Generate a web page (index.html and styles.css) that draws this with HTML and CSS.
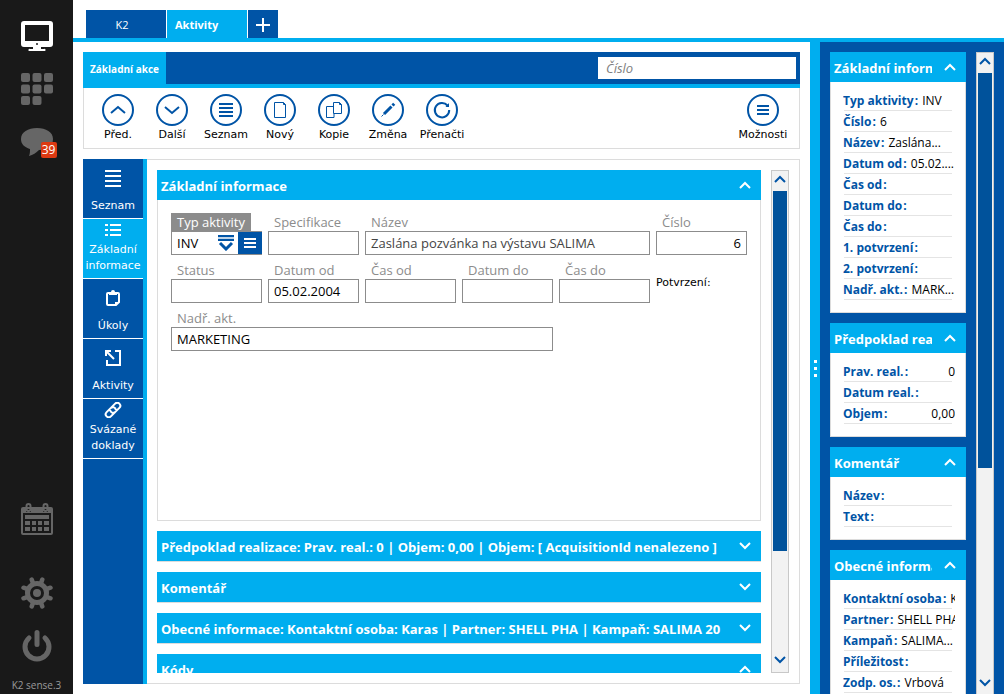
FILE: index.html
```html
<!DOCTYPE html>
<html lang="cs">
<head>
<meta charset="utf-8">
<meta name="viewport" content="width=device-width, initial-scale=1">
<title>K2 – Aktivity</title>
<link rel="stylesheet" href="styles.css">
</head>
<body>
<svg class="defs" aria-hidden="true">
  <symbol id="up" viewBox="0 0 12 8"><path d="M1 7l5-5 5 5" fill="none" stroke="currentColor" stroke-width="2"/></symbol>
  <symbol id="down" viewBox="0 0 12 8"><path d="M1 1l5 5 5-5" fill="none" stroke="currentColor" stroke-width="2"/></symbol>
</svg>
<div class="app">
  <nav class="rail" aria-label="Hlavní">
    <button class="rail-btn active" aria-label="Plocha"><svg viewBox="0 0 32 32"><path fill="currentColor" fill-rule="evenodd" d="M3 1h26a3 3 0 0 1 3 3v20a3 3 0 0 1-3 3h-9v2h3a1 1 0 0 1 1 2H8a1 1 0 0 1 1-2h3v-2H3a3 3 0 0 1-3-3V4a3 3 0 0 1 3-3zM4 5v16h24V5z"/><circle cx="16" cy="24" r="1" fill="#191919"/></svg></button>
    <button class="rail-btn" aria-label="Moduly"><svg viewBox="0 0 32 32" fill="currentColor"><rect width="9" height="9" rx="2"/><rect x="11.5" width="9" height="9" rx="2"/><rect x="23" width="9" height="9" rx="2"/><rect y="11.5" width="9" height="9" rx="2"/><rect x="11.5" y="11.5" width="9" height="9" rx="2"/><rect x="23" y="11.5" width="9" height="9" rx="2"/><rect y="23" width="9" height="9" rx="2"/><rect x="11.5" y="23" width="9" height="9" rx="2"/></svg></button>
    <button class="rail-btn" aria-label="Zprávy"><svg viewBox="0 0 32 32"><path fill="currentColor" d="M16 2c9 0 16 4 16 11s-6 11-14 11c-3 3-6 5-10 6 1-2 1-5 1-7-6-2-9-5-9-10C0 6 7 2 16 2z"/></svg><span class="badge">39</span></button>
    <div class="spacer"></div>
    <button class="rail-btn calendar" aria-label="Kalendář"><svg viewBox="0 0 32 32"><g fill="none" stroke="currentColor" stroke-width="2"><rect x="1" y="5" width="30" height="26" rx="1"/><rect x="5.500" y="1" width="4" height="7" rx="2"/><rect x="22.500" y="1" width="4" height="7" rx="2"/></g><path fill="currentColor" d="M1 5h4v4h5V5h12v4h5V5h4v5H1zM4 12h24v4H4zM4 18h5v4H4zM11 18h4v4h-4zM17 18h4v4h-4zM23 18h5v4h-5zM4 24h5v4H4zM11 24h4v4h-4zM17 24h4v4h-4zM23 24h5v4h-5z"/></svg></button>
    <button class="rail-btn" aria-label="Nastavení"><svg viewBox="0 0 32 32"><circle cx="16" cy="16" r="9.500" fill="none" stroke="currentColor" stroke-width="5"/><circle cx="16" cy="16" r="4" fill="currentColor"/><g stroke="currentColor" stroke-width="4.500" stroke-linecap="round"><path d="M12.200 6.800l-1.500-4.300M19.800 6.800l1.500-4.300M12.200 25.200l-1.500 4.300M19.800 25.200l1.500 4.300M6.800 12.200l-4.300-1.500M6.800 19.800l-4.300 1.500M25.200 12.200l4.300-1.500M25.200 19.800l4.300 1.500"/></g></svg></button>
    <button class="rail-btn" aria-label="Odhlásit"><svg viewBox="0 0 32 32" fill="none" stroke="currentColor" stroke-width="5" stroke-linecap="round"><path d="M16 2.500v12M8 8a12 12 0 1 0 16 0"/></svg></button>
    <div class="version">K2 sense.3</div>
  </nav>

  <div class="workspace">
    <div class="tabs">
      <button class="tab">K2</button>
      <button class="tab current">Aktivity</button>
      <button class="tab add" aria-label="Nová záložka"><svg width="14" height="14" viewBox="0 0 14 14"><path d="M7 0v14M0 7h14" stroke="#fff" stroke-width="2"/></svg></button>
    </div>

    <div class="desk">
      <main class="main">
        <header class="ribbon">
          <button class="ribbon-tab">Základní akce</button>
          <input class="search" type="text" placeholder="Číslo" aria-label="Číslo">
        </header>
        <div class="toolbar">
          <button class="tool"><svg viewBox="0 0 32 32"><circle cx="16" cy="16" r="15"/><path d="M9 19l7-6 7 6"/></svg>Před.</button>
          <button class="tool"><svg viewBox="0 0 32 32"><circle cx="16" cy="16" r="15"/><path d="M9 13l7 6 7-6"/></svg>Další</button>
          <button class="tool"><svg viewBox="0 0 32 32"><circle cx="16" cy="16" r="15"/><path d="M9 10h14M9 14h14M9 18h14M9 22h14"/></svg>Seznam</button>
          <button class="tool"><svg viewBox="0 0 32 32"><circle cx="16" cy="16" r="15"/><path class="thin" d="M10.500 8.500h9l2 2v13h-11zM19.500 8.500v2h2"/></svg>Nový</button>
          <button class="tool"><svg viewBox="0 0 32 32"><circle cx="16" cy="16" r="15"/><path class="thin" d="M15.500 19.500v-11h6l2 2v9zM21.500 8.500v2h2M15.500 12.500h-7v11h7.500v-4"/></svg>Kopie</button>
          <button class="tool"><svg viewBox="0 0 32 32"><circle cx="16" cy="16" r="15"/><path class="pencil" d="M12 20l7.500-7.500M20.500 11.500l1.700-1.700"/><path class="thin" d="M9.500 22.500l2-2"/></svg>Změna</button>
          <button class="tool"><svg viewBox="0 0 32 32"><circle cx="16" cy="16" r="15"/><path d="M21.500 11.500a7.200 7.200 0 1 0 1.700 4.500"/><path class="solid" d="M19.500 13H23V9z"/></svg>Přenačti</button>
          <button class="tool options"><svg viewBox="0 0 32 32"><circle cx="16" cy="16" r="15"/><path d="M10 12h12M10 16h12M10 20h12"/></svg>Možnosti</button>
        </div>

        <div class="detail">
          <nav class="side" aria-label="Části záznamu">
            <button class="side-item"><svg width="16" height="18" viewBox="0 0 16 18" stroke="#fff" stroke-width="2"><path d="M0 2h16M0 7h16M0 12h16M0 17h16"/></svg>Seznam</button>
            <button class="side-item current"><svg class="short" width="16" height="16" viewBox="0 0 16 16" stroke="#fff" stroke-width="2"><path d="M0 3h3M5 3h11M0 8h3M5 8h11M0 13h3M5 13h11"/></svg>Základní informace</button>
            <button class="side-item"><svg width="16" height="18" viewBox="0 0 16 18"><path d="M3 4h10a1 1 0 0 1 1 1v8l-3 3H3a1 1 0 0 1-1-1V5a1 1 0 0 1 1-1z" fill="none" stroke="#fff" stroke-width="2"/><path d="M4 6V3h2a2 2 0 0 1 4 0h2v3zM10 17v-4h4z" fill="#fff"/></svg>Úkoly</button>
            <button class="side-item"><svg width="16" height="18" viewBox="0 0 16 18" fill="none" stroke="#fff" stroke-width="2"><path d="M10 2h5v14H2v-5M1 7V2h5M1 2l8 8"/></svg>Aktivity</button>
            <button class="side-item"><svg class="short" width="18" height="16" viewBox="0 0 18 16" fill="none" stroke="#fff" stroke-width="2"><g transform="rotate(-45 9 8)"><path d="M9 11H3a3 3 0 0 1 0-6h6a3 3 0 0 1 2 5M9 5h6a3 3 0 0 1 0 6H9a3 3 0 0 1-2-5"/></g></svg>Svázané doklady</button>
          </nav>

          <div class="panel">
            <div class="sections">
              <section class="section">
                <button class="head" aria-expanded="true"><span>Základní informace</span><svg><use href="#up"/></svg></button>
                <form class="form">
                  <div class="field"><label class="focus" for="typ">Typ aktivity</label><div class="combo"><input id="typ" value="INV"><button type="button" aria-label="Rozbalit"><svg width="16" height="16" viewBox="0 0 16 16"><path d="M0 1h16M0 5h16" stroke="#0054a6" stroke-width="2"/><path d="M0 3h16" stroke="#7fa9d2"/><path d="M2 8l6 6 6-6" fill="none" stroke="#0054a6" stroke-width="3"/></svg></button><button type="button" class="menu" aria-label="Nabídka"><svg width="12" height="12" viewBox="0 0 12 12"><path d="M0 2h12M0 6h12M0 10h12" stroke="#fff" stroke-width="2"/></svg></button></div></div>
                  <div class="field"><label for="spec">Specifikace</label><input id="spec"></div>
                  <div class="field w3"><label for="nazev">Název</label><input class="muted" id="nazev" value="Zaslána pozvánka na výstavu SALIMA"></div>
                  <div class="field"><label for="cislo">Číslo</label><input class="number" id="cislo" value="6"></div>
                  <div class="field"><label for="status">Status</label><input id="status"></div>
                  <div class="field"><label for="dod">Datum od</label><input id="dod" value="05.02.2004"></div>
                  <div class="field"><label for="cod">Čas od</label><input id="cod"></div>
                  <div class="field"><label for="ddo">Datum do</label><input id="ddo"></div>
                  <div class="field"><label for="cdo">Čas do</label><input id="cdo"></div>
                  <div class="confirm">Potvrzení:</div>
                  <div class="field w4"><label for="nadr">Nadř. akt.</label><input id="nadr" value="MARKETING"></div>
                </form>
              </section>
              <section class="section closed"><button class="head" aria-expanded="false"><span>Předpoklad realizace: Prav. real.: 0 | Objem: 0,00 | Objem: [ AcquisitionId nenalezeno ]</span><svg><use href="#down"/></svg></button></section>
              <section class="section closed"><button class="head" aria-expanded="false"><span>Komentář</span><svg><use href="#down"/></svg></button></section>
              <section class="section closed"><button class="head" aria-expanded="false"><span>Obecné informace: Kontaktní osoba: Karas | Partner: SHELL PHA | Kampaň: SALIMA 20</span><svg><use href="#down"/></svg></button></section>
              <section class="section closed"><button class="head" aria-expanded="true"><span>Kódy</span><svg><use href="#up"/></svg></button></section>
            </div>
            <div class="scroll">
              <button aria-label="Nahoru"><svg><use href="#up"/></svg></button>
              <div class="track"><div class="thumb"></div></div>
              <button aria-label="Dolů"><svg><use href="#down"/></svg></button>
            </div>
          </div>
        </div>
      </main>

      <div class="splitter"><i></i><i></i><i></i></div>

      <aside class="preview">
        <div class="cards">
          <section class="card">
            <button class="head" aria-expanded="true"><span>Základní informace</span><svg><use href="#up"/></svg></button>
            <dl>
              <div><dt>Typ aktivity&#8202;:</dt><dd>INV</dd></div>
              <div><dt>Číslo&#8202;:</dt><dd>6</dd></div>
              <div><dt>Název&#8202;:</dt><dd>Zaslána...</dd></div>
              <div><dt>Datum od&#8202;:</dt><dd>05.02....</dd></div>
              <div><dt>Čas od&#8202;:</dt><dd></dd></div>
              <div><dt>Datum do&#8202;:</dt><dd></dd></div>
              <div><dt>Čas do&#8202;:</dt><dd></dd></div>
              <div><dt>1. potvrzení&#8202;:</dt><dd></dd></div>
              <div><dt>2. potvrzení&#8202;:</dt><dd></dd></div>
              <div><dt>Nadř. akt.&#8202;:</dt><dd>MARK...</dd></div>
            </dl>
          </section>
          <section class="card">
            <button class="head" aria-expanded="true"><span>Předpoklad realizace</span><svg><use href="#up"/></svg></button>
            <dl>
              <div><dt>Prav. real.&#8202;:</dt><dd class="number">0</dd></div>
              <div><dt>Datum real.&#8202;:</dt><dd></dd></div>
              <div><dt>Objem&#8202;:</dt><dd class="number">0,00</dd></div>
            </dl>
          </section>
          <section class="card">
            <button class="head" aria-expanded="true"><span>Komentář</span><svg><use href="#up"/></svg></button>
            <dl>
              <div><dt>Název&#8202;:</dt><dd></dd></div>
              <div><dt>Text&#8202;:</dt><dd></dd></div>
            </dl>
          </section>
          <section class="card">
            <button class="head" aria-expanded="true"><span>Obecné informace</span><svg><use href="#up"/></svg></button>
            <dl>
              <div><dt>Kontaktní osoba&#8202;:</dt><dd>K</dd></div>
              <div><dt>Partner&#8202;:</dt><dd>SHELL PHA</dd></div>
              <div><dt>Kampaň&#8202;:</dt><dd>SALIMA...</dd></div>
              <div><dt>Příležitost&#8202;:</dt><dd></dd></div>
              <div><dt>Zodp. os.&#8202;:</dt><dd>Vrbová</dd></div>
            </dl>
          </section>
        </div>
        <div class="scroll long">
          <button aria-label="Nahoru"><svg><use href="#up"/></svg></button>
          <div class="track"><div class="thumb"></div></div>
          <button aria-label="Dolů"><svg><use href="#down"/></svg></button>
        </div>
      </aside>
    </div>
  </div>
</div>
</body>
</html>
```
FILE: styles.css
```css
:root {
  --blue: #0054a6;
  --cyan: #00aeef;
  --line: #dcdcdc;
  --ui: "Open Sans", "Noto Sans", sans-serif;
  --wide: "DejaVu Sans", sans-serif;
}

* { box-sizing: border-box; }

body {
  margin: 0;
  background: #fff;
  color: #000;
  font: 13px/18px var(--ui);
}

button {
  margin: 0;
  padding: 0;
  border: 0;
  background: none;
  color: inherit;
  font: inherit;
  cursor: pointer;
}

input {
  width: 100%;
  min-width: 0;
  height: 24px;
  margin: 0;
  padding: 0 5px;
  border: 1px solid #8c8c8c;
  border-radius: 0;
  background: #fff;
  color: #000;
  font: 13px/18px var(--ui);
  outline: 0;
}

svg { display: block; flex: none; }
.defs { display: none; }

.app {
  display: flex;
  height: 100vh;
  overflow: hidden;
}

/* Dark rail */
.rail {
  display: flex;
  flex-direction: column;
  align-items: center;
  gap: 21px;
  flex: none;
  width: 73px;
  padding: 20px 0 1px;
  background: #191919;
  color: #666;
}
.rail-btn { position: relative; width: 32px; height: 32px; }
.rail-btn svg { width: 32px; height: 32px; }
.rail-btn.active { color: #fff; }
.rail .spacer { flex: 1; }
.calendar { margin-bottom: 21px; }
.badge {
  position: absolute;
  right: -4px;
  bottom: 0;
  width: 16px;
  border-radius: 2px;
  background: #dc3912;
  color: #fff;
  font-size: 12px;
  line-height: 16px;
  text-align: center;
}
.version {
  margin-top: -6px;
  color: #999;
  font-size: 10px;
  line-height: 16px;
}

/* Tabs */
.workspace {
  display: flex;
  flex-direction: column;
  flex: 1;
  min-width: 0;
}
.tabs {
  display: flex;
  gap: 1px;
  padding: 10px 13px 0;
  border-bottom: 4px solid var(--cyan);
}
.tab {
  width: 80px;
  height: 28px;
  padding: 2px 8px 0 0;
  background: var(--blue);
  color: #fff;
  font-size: 11px;
}
.tab.current {
  padding: 2px 0 0 8px;
  background: var(--cyan);
  font-weight: 700;
  text-align: left;
}
.tab.add {
  display: grid;
  place-items: center;
  width: 30px;
  padding: 2px 0 0;
}

.desk { display: flex; flex: 1; min-height: 0; }

.main {
  display: flex;
  flex-direction: column;
  flex: 1;
  min-width: 0;
  padding: 10px;
}

.ribbon {
  display: flex;
  justify-content: space-between;
  flex: none;
  height: 36px;
  border-bottom: 4px solid var(--cyan);
  background: var(--blue);
}
.ribbon-tab {
  width: 83px;
  padding-top: 2px;
  background: var(--cyan);
  color: #fff;
  font-size: 10px;
  font-weight: 700;
}
.search {
  width: 198px;
  height: 22px;
  margin: 5px 4px 0 0;
  padding: 0 8px;
  border: 0;
}
.search::placeholder { color: #808080; font-style: italic; opacity: 1; }

.toolbar {
  display: flex;
  flex: none;
  height: 61px;
  margin-bottom: 10px;
  padding: 6px 9px 0 7px;
  border: 1px solid var(--line);
  border-top: 0;
}
.tool {
  display: flex;
  flex-direction: column;
  align-items: center;
  flex: none;
  width: 54px;
  height: 50px;
  font: 11px/18px var(--wide);
}
.tool svg {
  width: 32px;
  height: 32px;
  fill: none;
  stroke: var(--blue);
  stroke-width: 2;
}
.tool .thin { stroke-width: 1; }
.tool .pencil { stroke-width: 3; }
.tool .solid { fill: var(--blue); stroke: none; }
.tool.options { margin-left: auto; }

/* Record detail */
.detail { display: flex; flex: 1; min-height: 0; }
.side {
  flex: none;
  width: 64px;
  border-right: 4px solid var(--cyan);
  background: var(--blue);
}
.side-item {
  display: flex;
  flex-direction: column;
  align-items: center;
  gap: 11px;
  width: 100%;
  height: 60px;
  padding: 10px 0 0;
  border-bottom: 1px solid #fff;
  color: #fff;
  font: 11px/16px var(--wide);
}
.side-item.current { background: var(--cyan); }
.side-item:has(.short) { gap: 4px; padding-top: 3px; }

.panel {
  display: flex;
  gap: 10px;
  flex: 1;
  min-width: 0;
  padding: 10px;
  border: 1px solid var(--line);
  border-left: 0;
}
.sections {
  display: flex;
  flex-direction: column;
  gap: 10px;
  flex: 1;
  min-width: 0;
  overflow: hidden;
}
.section { flex: none; }
.section.closed { border-bottom: 1px solid var(--line); }

.head {
  display: flex;
  align-items: center;
  width: 100%;
  height: 30px;
  padding: 0 10px 0 4px;
  background: var(--cyan);
  color: #fff;
  font-weight: 700;
  text-align: left;
}
.head span { flex: 1; padding-top: 2px; overflow: hidden; white-space: nowrap; }
.head svg { width: 12px; height: 8px; margin-left: 12px; }

.form {
  display: grid;
  grid-template-columns: repeat(6, minmax(0, 1fr));
  align-content: start;
  gap: 6px;
  min-height: 321px;
  padding: 13px;
  border: 1px solid var(--line);
  border-top: 0;
}
.field label {
  display: block;
  width: fit-content;
  height: 18px;
  padding: 0 6px;
  color: #8c8c8c;
}
.field label.focus { background: #8c8c8c; color: #fff; }
.field input { display: block; }
.w3 { grid-column: span 3; }
.w4 { grid-column: 1 / span 4; }
.field .muted { color: #444; }
.number { text-align: right; }
.combo {
  display: flex;
  align-items: center;
  height: 24px;
  border: 1px solid #8c8c8c;
  border-right: 0;
}
.combo input { flex: 1; height: 20px; border: 0; }
.combo .menu {
  display: grid;
  place-items: center;
  width: 24px;
  height: 22px;
  margin-left: 4px;
  background: var(--blue);
}
.confirm { padding-top: 13px; font: 11px/18px var(--wide); }

/* Scroll column */
.scroll {
  display: flex;
  flex-direction: column;
  flex: none;
  width: 18px;
  border: 1px solid #c8c8c8;
  background: #f2f2f2;
  color: var(--blue);
}
.scroll button {
  display: grid;
  place-items: center;
  flex: none;
  height: 20px;
  padding-bottom: 4px;
}
.scroll svg { width: 12px; height: 8px; }
.track { flex: 1; padding: 0 1px; }
.thumb { height: 78%; background: #00529b; }

/* Right preview */
.splitter {
  display: flex;
  flex-direction: column;
  align-items: center;
  justify-content: center;
  gap: 4px;
  flex: none;
  width: 10px;
  background: var(--cyan);
}
.splitter i { width: 3px; height: 3px; background: #fff; }

.preview {
  display: flex;
  gap: 10px;
  flex: none;
  width: 184px;
  padding: 10px 10px 0;
  background: var(--blue);
}
.cards {
  display: flex;
  flex-direction: column;
  gap: 10px;
  flex: 1;
  min-width: 0;
  overflow: hidden;
}
.card { flex: none; }
.card dl {
  margin: 0;
  padding: 8px 10px 12px 12px;
  border: 1px solid var(--line);
  border-top: 0;
  background: #fff;
}
.card dl div {
  display: flex;
  gap: 4px;
  height: 21px;
  overflow: hidden;
  background: linear-gradient(#e4e4e4, #e4e4e4) 1px 100% / calc(100% - 4px) 1px no-repeat;
  font-size: 12px;
  line-height: 21px;
  white-space: nowrap;
}
.card dt { color: var(--blue); font-weight: 700; }
.card dd { flex: 1; margin: 0; }
.long { border-bottom: 0; }
.long button:last-child { height: 22px; padding-bottom: 0; }
.long .thumb { height: 66%; }
```
